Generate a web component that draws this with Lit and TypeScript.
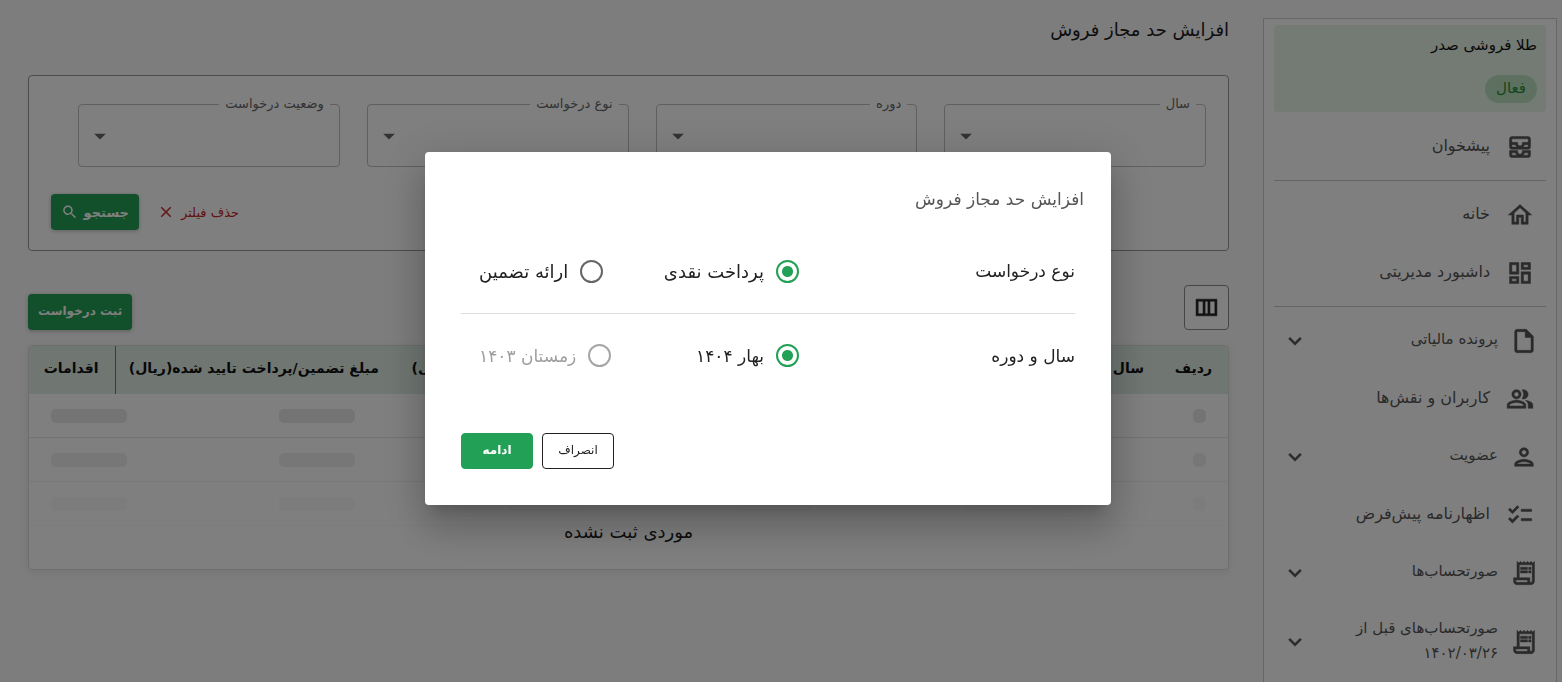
import { LitElement, html, css, svg, nothing } from "lit";
import { customElement, property } from "lit/decorators.js";

const ICONS: Record<string, string> = {
  inbox:
    "M19 3H5c-1.1 0-2 .9-2 2v7c0 1.1.9 2 2 2h14c1.1 0 2-.9 2-2V5c0-1.1-.9-2-2-2zM5 10h3.13c.21.78.67 1.47 1.27 2H5v-2zm14 2h-4.4c.6-.53 1.06-1.22 1.27-2H19v2zm0-4h-5v1c0 1.07-.93 2-2 2s-2-.93-2-2V8H5V5h14v3zm-5 7v1c0 .47-.19.9-.48 1.25-.37.45-.92.75-1.52.75s-1.15-.3-1.52-.75c-.29-.35-.48-.78-.48-1.25v-1H3v4c0 1.1.9 2 2 2h14c1.1 0 2-.9 2-2v-4h-7zm-9 2h3.13c.02.09.06.17.09.25.24.68.65 1.28 1.18 1.75H5v-2zm14 2h-4.4c.54-.47.95-1.07 1.18-1.75.03-.08.07-.16.09-.25H19v2z",
  home: "m12 5.69 5 4.5V18h-2v-6H9v6H7v-7.81l5-4.5M12 3 2 12h3v8h6v-6h2v6h6v-8h3L12 3z",
  dashboard:
    "M19 5v2h-4V5h4M9 5v6H5V5h4m10 8v6h-4v-6h4M9 17v2H5v-2h4M21 3h-8v6h8V3zM11 3H3v10h8V3zm10 8h-8v10h8V11zm-10 4H3v6h8v-6z",
  file: "M14 2H6c-1.1 0-1.99.9-1.99 2L4 20c0 1.1.89 2 1.99 2H18c1.1 0 2-.9 2-2V8l-6-6zM6 20V4h7v5h5v11H6z",
  people:
    "M16.67 13.13C18.04 14.06 19 15.32 19 17v3h4v-3c0-2.18-3.57-3.47-6.33-3.87zM15 12c2.21 0 4-1.79 4-4s-1.79-4-4-4c-.47 0-.91.1-1.33.24C14.5 5.27 15 6.58 15 8s-.5 2.73-1.33 3.76c.42.14.86.24 1.33.24zM9 12c2.21 0 4-1.79 4-4s-1.79-4-4-4-4 1.79-4 4 1.79 4 4 4zm0-6c1.1 0 2 .9 2 2s-.9 2-2 2-2-.9-2-2 .9-2 2-2zm0 7c-2.67 0-8 1.34-8 4v3h16v-3c0-2.66-5.33-4-8-4zm6 5H3v-.99C3.2 16.29 6.3 15 9 15s5.8 1.29 6 2v1z",
  person:
    "M12 6c1.1 0 2 .9 2 2s-.9 2-2 2-2-.9-2-2 .9-2 2-2m0 10c2.7 0 5.8 1.29 6 2H6c.23-.72 3.31-2 6-2m0-12C9.79 4 8 5.79 8 8s1.79 4 4 4 4-1.79 4-4-1.79-4-4-4zm0 10c-2.67 0-8 1.34-8 4v2h16v-2c0-2.66-5.33-4-8-4z",
  checklist:
    "M22 7h-9v2h9V7zm0 8h-9v2h9v-2zM5.54 11 2 7.46l1.41-1.41 2.12 2.12 4.24-4.24 1.41 1.41L5.54 11zm0 8L2 15.46l1.41-1.41 2.12 2.12 4.24-4.24 1.41 1.41L5.54 19z",
  receipt:
    "M19.5 3.5 18 2l-1.5 1.5L15 2l-1.5 1.5L12 2l-1.5 1.5L9 2 7.5 3.5 6 2v14H3v3c0 1.66 1.34 3 3 3h12c1.66 0 3-1.34 3-3V2l-1.5 1.5zM15 20H6c-.55 0-1-.45-1-1v-1h10v2zm4-1c0 .55-.45 1-1 1s-1-.45-1-1v-3H8V5h11v14zM9 7h6v2H9zM16 7h2v2h-2zM9 10h6v2H9zM16 10h2v2h-2z",
  chevron: "M16.59 8.59 12 13.17 7.41 8.59 6 10l6 6 6-6z",
  caret: "m7 10 5 5 5-5z",
  search:
    "M15.5 14h-.79l-.28-.27C15.41 12.59 16 11.11 16 9.5 16 5.91 13.09 3 9.5 3S3 5.91 3 9.5 5.91 16 9.5 16c1.61 0 3.09-.59 4.23-1.57l.27.28v.79l5 4.99L20.49 19l-4.99-5zm-6 0C7.01 14 5 11.99 5 9.5S7.01 5 9.5 5 14 7.01 14 9.5 11.99 14 9.5 14z",
  close:
    "M19 6.41 17.59 5 12 10.59 6.41 5 5 6.41 10.59 12 5 17.59 6.41 19 12 13.41 17.59 19 19 17.59 13.41 12z",
  columns: "M2 4v16h20V4H2zm6.67 14H4V6h4.67v12zm4.66 0h-2.66V6h2.66v12zM20 18h-4.67V6H20v12z",
};

const icon = (name: string, size: number) => html`<svg
  width=${size}
  height=${size}
  viewBox="0 0 24 24"
  fill="currentColor"
  aria-hidden="true"
>
  ${svg`<path d=${ICONS[name]}></path>`}
</svg>`;

@customElement("side-nav")
class SideNav extends LitElement {
  static styles = css`
    :host {
      display: block;
      flex: none;
      box-sizing: border-box;
      width: 294px;
      padding: 6px 10px 0;
      border: 1px solid #cfcfcf;
      background: #fff;
    }
    .shop {
      display: flex;
      flex-direction: column;
      align-items: flex-start;
      gap: 17px;
      padding: 7px 9px 9px;
      margin-bottom: 6px;
      border-radius: 4px;
      background: #e8f5e9;
      font-size: 15px;
      line-height: 26px;
      color: #111;
    }
    .chip {
      padding: 0 11px 2px;
      border-radius: 14px;
      line-height: 26px;
      background: #bce3c0;
      color: #2e8b3a;
    }
    a {
      box-sizing: border-box;
      min-height: 58px;
      display: flex;
      align-items: center;
      gap: 16px;
      padding: 0 12px;
      font-size: 16px;
      line-height: 25px;
      color: #555;
      text-decoration: none;
    }
    a.group {
      padding: 0 8px;
      gap: 12px;
      font-size: 15px;
    }
    .two-line {
      min-height: 80px;
    }
    .label {
      flex: 1;
      padding-bottom: 3px;
    }
    svg {
      flex: none;
      stroke: currentColor;
      stroke-width: 0.4;
    }
    hr {
      margin: 4px 0 5px;
      border: 0;
      border-top: 1px solid #c8c8c8;
    }
  `;

  item(name: string, label: unknown, group = false, extra = "") {
    return html`<a href="#" class="${group ? "group" : ""} ${extra}">
      ${icon(name, 28)}<span class="label">${label}</span>
      ${group ? icon("chevron", 26) : nothing}
    </a>`;
  }

  render() {
    return html`
      <div class="shop"><span>طلا فروشی صدر</span><span class="chip">فعال</span></div>
      <nav>
        ${this.item("inbox", "پیشخوان")}
        <hr />
        ${this.item("home", "خانه")} ${this.item("dashboard", "داشبورد مدیریتی")}
        <hr />
        ${this.item("file", "پرونده مالیاتی", true)}
        ${this.item("people", "کاربران و نقش‌ها")}
        ${this.item("person", "عضویت", true)}
        ${this.item("checklist", "اظهارنامه پیش‌فرض")}
        ${this.item("receipt", "صورتحساب‌ها", true)}
        ${this.item("receipt", html`صورتحساب‌های قبل از<br />۱۴۰۲/۰۳/۲۶`, true, "two-line")}
      </nav>
    `;
  }
}

@customElement("filter-field")
class FilterField extends LitElement {
  @property() label = "";

  static styles = css`
    :host {
      display: block;
      min-width: 0;
    }
    fieldset {
      position: relative;
      box-sizing: border-box;
      height: 74px;
      margin: 0;
      padding: 0;
      border: 1px solid #c0c0c0;
      border-radius: 4px;
    }
    legend {
      margin-inline-start: 9px;
      padding: 0 6px;
      font-size: 13px;
      line-height: 22px;
      color: #666;
    }
    select {
      appearance: none;
      display: block;
      width: 100%;
      height: 50px;
      border: 0;
      background: transparent;
      font: inherit;
    }
    svg {
      position: absolute;
      left: 7px;
      bottom: 16px;
      color: #666;
      pointer-events: none;
    }
  `;

  render() {
    return html`<fieldset>
      <legend><label for="value">${this.label}</label></legend>
      <select id="value">
        <option></option>
      </select>
      ${icon("caret", 28)}
    </fieldset>`;
  }
}

@customElement("request-dialog")
class RequestDialog extends LitElement {
  static styles = css`
    :host {
      position: fixed;
      inset: 0;
      display: flex;
      align-items: center;
      justify-content: center;
      padding: 0 0 25px;
      padding-inline-start: 26px;
      background: rgba(0, 0, 0, 0.5);
    }
    .panel {
      box-sizing: border-box;
      width: 100%;
      max-width: 686px;
      padding: 32px 36px 36px;
      border-radius: 4px;
      background: #fff;
      color: #222;
      box-shadow: 0 11px 15px -7px rgba(0, 0, 0, 0.2), 0 24px 38px 3px rgba(0, 0, 0, 0.14),
        0 9px 46px 8px rgba(0, 0, 0, 0.12);
    }
    h2 {
      margin: 0 -9px 15px;
      font-size: 17px;
      line-height: 30px;
      font-weight: 500;
      color: #555;
    }
    .row {
      display: flex;
      align-items: center;
      justify-content: space-between;
      height: 84px;
      font-size: 17px;
    }
    .row + .row {
      box-sizing: border-box;
      border-top: 1px solid #dcdcdc;
    }
    .choices {
      display: flex;
      justify-content: space-between;
      width: 320px;
      margin-inline-end: 18px;
      font-size: 18px;
    }
    .row + .row .choices {
      font-size: 17px;
    }
    label {
      display: flex;
      align-items: center;
      gap: 12px;
    }
    label.off {
      color: #9e9e9e;
    }
    input {
      appearance: none;
      box-sizing: border-box;
      width: 23px;
      height: 23px;
      margin: 0;
      border: 2px solid #666;
      border-radius: 50%;
    }
    input:checked {
      border-color: #22a055;
      background: radial-gradient(circle, #22a055 5px, transparent 6px);
    }
    input:disabled {
      border-color: #a6a6a6;
    }
    .actions {
      display: flex;
      justify-content: flex-end;
      gap: 9px;
      margin-top: 36px;
    }
    button {
      width: 72px;
      height: 36px;
      padding: 0 0 3px;
      border: 1px solid #222;
      border-radius: 4px;
      background: #fff;
      color: #222;
      font-family: inherit;
      font-size: 12px;
    }
    .primary {
      border-color: #22a055;
      background: #22a055;
      color: #fff;
      font-weight: 700;
    }
  `;

  render() {
    return html`<form class="panel" role="dialog" aria-modal="true" aria-labelledby="title">
      <h2 id="title">افزایش حد مجاز فروش</h2>
      <div class="row">
        <span>نوع درخواست</span>
        <div class="choices">
          <label><input type="radio" name="kind" checked />پرداخت نقدی</label>
          <label><input type="radio" name="kind" />ارائه تضمین</label>
        </div>
      </div>
      <div class="row">
        <span>سال و دوره</span>
        <div class="choices">
          <label><input type="radio" name="period" checked />بهار ۱۴۰۴</label>
          <label class="off"><input type="radio" name="period" disabled />زمستان ۱۴۰۳</label>
        </div>
      </div>
      <div class="actions">
        <button type="button">انصراف</button>
        <button type="button" class="primary">ادامه</button>
      </div>
    </form>`;
  }
}

@customElement("app-root")
class AppRoot extends LitElement {
  static styles = css`
    :host {
      display: flex;
      align-items: flex-start;
      gap: 34px;
      box-sizing: border-box;
      height: 100vh;
      overflow: hidden;
      padding: 18px 5px 0 28px;
      direction: rtl;
      background: #fafafa;
      color: #1c1c1c;
      font-family: "DejaVu Sans", sans-serif;
      font-size: 14px;
    }
    main {
      flex: 1;
      min-width: 0;
    }
    h1 {
      margin: 0 0 33px;
      font-size: 18px;
      line-height: 24px;
      font-weight: 500;
    }
    .filters {
      padding: 17px 22px 20px;
      border: 1px solid #999;
      border-radius: 4px;
      background: #fff;
    }
    .fields {
      display: grid;
      grid-template-columns: repeat(4, minmax(0, 1fr));
      gap: 27px;
      margin-inline-end: 27px;
      margin-bottom: 27px;
    }
    .bar {
      display: flex;
      align-items: center;
      justify-content: flex-end;
      gap: 18px;
    }
    button {
      display: flex;
      align-items: center;
      justify-content: center;
      gap: 5px;
      box-sizing: border-box;
      height: 36px;
      border: 0;
      border-radius: 4px;
      background: transparent;
      font-family: inherit;
      font-size: 14px;
    }
    .solid {
      padding: 0 10px 2px;
      background: #22a055;
      color: #fff;
      font-size: 12px;
      font-weight: 700;
      box-shadow: 0 1px 4px rgba(0, 0, 0, 0.25);
    }
    .search {
      width: 88px;
      padding-bottom: 0;
      font-size: 13px;
    }
    .clear {
      padding: 0;
      color: #c62828;
      font-size: 13px;
      gap: 6px;
    }
    .tools {
      display: flex;
      justify-content: space-between;
      align-items: flex-end;
      margin: 34px 0 15px;
    }
    .columns {
      width: 45px;
      height: 45px;
      border: 1px solid #8c8c8c;
      color: #222;
      background: #fff;
    }
    .columns svg {
      stroke: currentColor;
      stroke-width: 0.5;
    }
    .card {
      border: 1px solid #dcdcdc;
      border-radius: 4px;
      overflow: hidden;
      background: #fff;
      box-shadow: 0 2px 8px rgba(0, 0, 0, 0.08);
    }
    table {
      width: 100%;
      table-layout: fixed;
      border-collapse: collapse;
    }
    th {
      height: 44px;
      padding: 0 16px 4px;
      text-align: start;
      white-space: nowrap;
      background: #e0eee6;
      font-size: 14px;
      font-weight: 600;
      color: #111;
    }
    th:last-child {
      border-inline-start: 1px solid #777;
    }
    td {
      height: 43px;
      padding: 0 22px;
      border-bottom: 1px solid #e6e6e6;
    }
    .bones {
      display: flex;
      justify-content: space-between;
    }
    .bones i {
      width: 76px;
      height: 14px;
      border-radius: 5px;
      background: #e8e8e8;
    }
    .bones i:first-child {
      width: 13px;
    }
    .second td {
      border-color: #f0f0f0;
    }
    .second i {
      background: #eeeeee;
    }
    .third td {
      border-color: #f9f9f9;
    }
    .third i {
      background: #f8f8f8;
    }
    .empty td {
      padding-bottom: 32px;
      height: 11px;
      border: 0;
      text-align: center;
      font-size: 18px;
      line-height: 11px;
    }
    .narrow {
      width: 68px;
    }
    .short {
      width: 72px;
    }
    .amount {
      width: 280px;
    }
    .ops {
      width: 86px;
    }
  `;

  render() {
    const bones = (cls: string) => html`<tr class=${cls}>
      <td colspan="7">
        <div class="bones"><i></i><i></i><i></i><i></i><i></i><i></i></div>
      </td>
    </tr>`;
    return html`
      <side-nav></side-nav>
      <main>
        <h1>افزایش حد مجاز فروش</h1>
        <section class="filters">
          <div class="fields">
            ${["سال", "دوره", "نوع درخواست", "وضعیت درخواست"].map(
              (l) => html`<filter-field label=${l}></filter-field>`
            )}
          </div>
          <div class="bar">
            <button class="clear">حذف فیلتر ${icon("close", 18)}</button>
            <button class="solid search">جستجو ${icon("search", 18)}</button>
          </div>
        </section>
        <div class="tools">
          <button class="columns" aria-label="ستون‌ها">${icon("columns", 25)}</button>
          <button class="solid">ثبت درخواست</button>
        </div>
        <div class="card">
          <table>
            <colgroup>
              <col class="narrow" />
              <col class="short" />
              <col class="short" />
              <col />
              <col class="amount" />
              <col class="amount" />
              <col class="ops" />
            </colgroup>
            <thead>
              <tr>
                <th>ردیف</th>
                <th>سال</th>
                <th>دوره</th>
                <th>نوع درخواست</th>
                <th>مبلغ تضمین/پرداخت مورد نیاز(ریال)</th>
                <th>مبلغ تضمین/پرداخت تایید شده(ریال)</th>
                <th>اقدامات</th>
              </tr>
            </thead>
            <tbody>
              ${bones("first")} ${bones("second")} ${bones("third")}
              <tr class="empty">
                <td colspan="7">موردی ثبت نشده</td>
              </tr>
            </tbody>
          </table>
        </div>
      </main>
      <request-dialog></request-dialog>
    `;
  }
}
